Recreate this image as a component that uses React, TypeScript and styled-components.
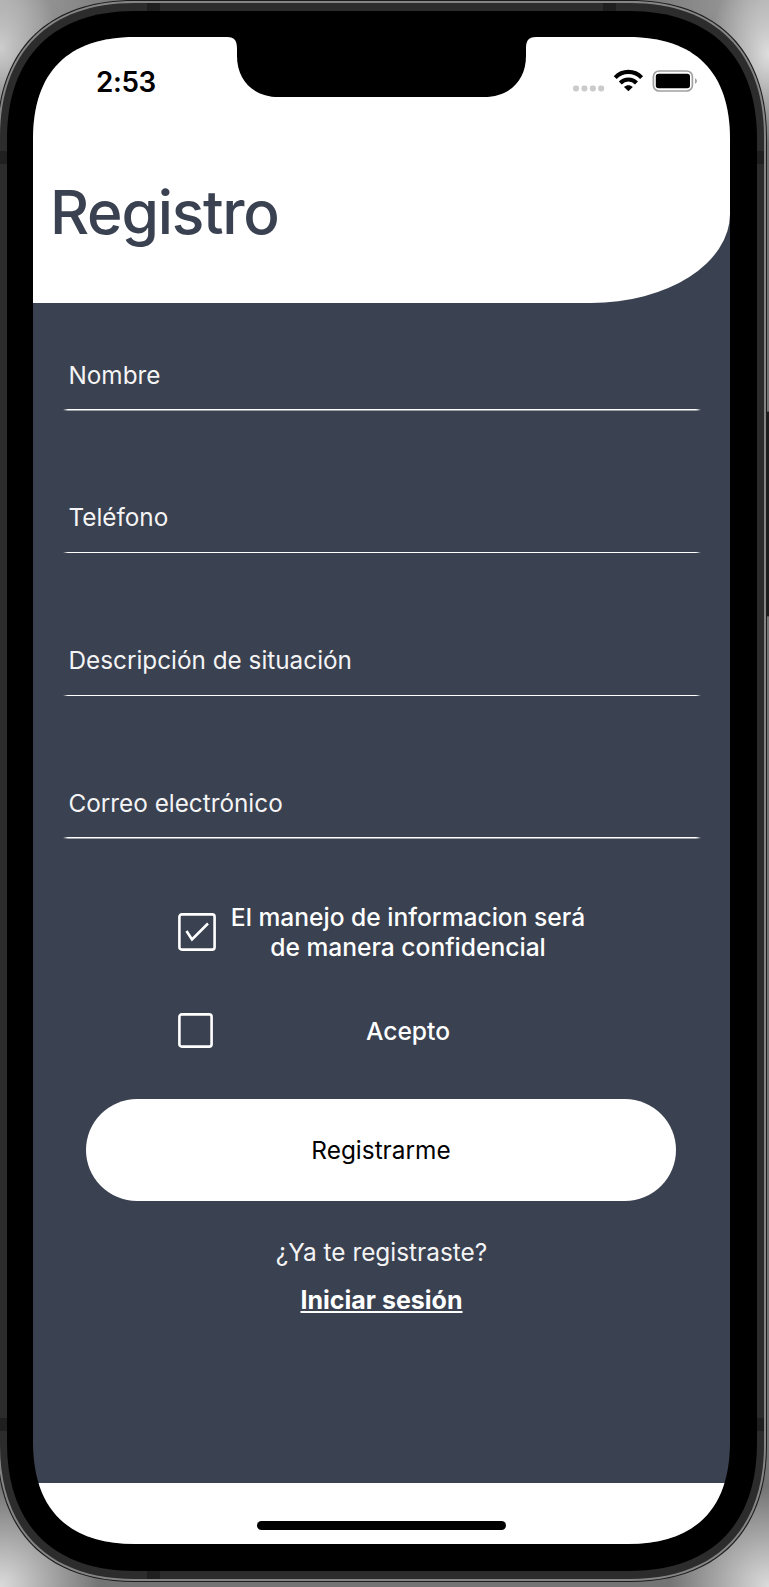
import React, { useState } from "react";
import styled, { createGlobalStyle } from "styled-components";

const INK = "#3a4150";

const Global = createGlobalStyle`
  * { box-sizing: border-box; }
  body {
    margin: 0;
    overflow: hidden;
    font-family: Inter, "Liberation Sans", sans-serif;
    -webkit-font-smoothing: antialiased;
  }
`;

/* Rounded rectangle with continuous corners: each starts l px from the corner, with control points c px from it. */
const squircle = (w: number, h: number, l: number, c: number) =>
  `path("M0 ${l}C0 ${c} ${c} 0 ${l} 0H${w - l}C${w - c} 0 ${w} ${c} ${w} ${l}V${h - l}C${w} ${h - c} ${w - c} ${h} ${w - l} ${h}H${l}C${c} ${h} 0 ${h - c} 0 ${h - l}Z")`;

const Backdrop = styled.main`
  position: relative;
  width: 769px;
  height: 1587px;
  overflow: hidden;
  background:
    radial-gradient(60px 80px at 0 48px, #cdcdcd 0, rgba(150, 150, 150, 0) 100%),
    radial-gradient(60px 90px at 769px 54px, #dedede 0, rgba(150, 150, 150, 0) 100%),
    radial-gradient(100px 100px at 0 1587px, #dcdcdc 0, rgba(130, 130, 130, 0) 100%),
    radial-gradient(100px 100px at 769px 1587px, #dcdcdc 0, rgba(130, 130, 130, 0) 100%),
    radial-gradient(140px 90px at 0 0, #a2a2a2 0, rgba(130, 130, 130, 0) 100%),
    radial-gradient(140px 90px at 769px 0, #a2a2a2 0, rgba(130, 130, 130, 0) 100%),
    #747474;
`;

const Layer = styled.div<{ $w: number; $h: number; $l: number; $c: number; $inset?: string; $fill: string }>`
  width: ${(p) => p.$w}px;
  height: ${(p) => p.$h}px;
  padding: ${(p) => p.$inset ?? 0};
  background: ${(p) => p.$fill};
  clip-path: ${(p) => squircle(p.$w, p.$h, p.$l, p.$c)};
`;

const Device = styled(Layer)`
  margin-left: -3px;
`;

const Frame = styled(Layer)`
  position: relative;
`;

const Bezel = styled(Layer)`
  position: relative;
`;

const Band = styled.i<{ $x: number; $y: number; $side?: boolean }>`
  position: absolute;
  left: ${(p) => p.$x}px;
  top: ${(p) => p.$y}px;
  width: ${(p) => (p.$side ? 8 : 13)}px;
  height: ${(p) => (p.$side ? 13 : 8)}px;
  background: #1f1f1f;
`;

const SideButton = styled.i`
  position: absolute;
  left: 766px;
  top: 411px;
  width: 3px;
  height: 206px;
  background: #1c1c1c;
  border: 1px solid #555;
  border-right: 0;
`;

const Screen = styled(Layer)`
  position: relative;
  display: flex;
  flex-direction: column;
`;

const Notch = styled.svg`
  position: absolute;
  left: 194px;
  top: 0;
`;

const Header = styled.header`
  height: 266px;
  background: #fff;
  border-bottom-right-radius: 139px 89px;
`;

const StatusBar = styled.div`
  display: flex;
  justify-content: space-between;
  height: 88px;
  padding: 31px 32px 0 63px;
`;

const Clock = styled.time`
  color: #000;
  font-size: 27.8px;
  font-weight: 600;
  line-height: 28px;
  letter-spacing: -0.4px;
`;

const Title = styled.h1`
  margin: 51px 0 0 17px;
  color: ${INK};
  font-size: 60.5px;
  font-weight: 500;
  line-height: 72px;
  letter-spacing: -1.25px;
`;

const Form = styled.form`
  display: flex;
  flex-direction: column;
  align-items: center;
  height: 1180px;
  padding-top: 37.5px;
  color: #fff;
`;

const Fields = styled.div`
  display: flex;
  flex-direction: column;
  gap: 72.8px;
  margin-bottom: 62.9px;
`;

const Field = styled.input`
  width: 638px;
  height: 70px;
  margin: 0;
  padding: 0 6px 2px;
  color: #fff;
  font: 400 24.3px/30px Inter, "Liberation Sans", sans-serif;
  background: linear-gradient(90deg, transparent, #fff 5px, #fff 633px, transparent) bottom / 100% 1.5px no-repeat;
  border: 0;
  outline: 0;
  &::placeholder { color: #f4f4f5; opacity: 1; }
`;

const Option = styled.label`
  display: flex;
  align-items: center;
  width: 410px;
  margin: 0 0 51.3px 3px;
`;

const NativeBox = styled.input`
  position: absolute;
  opacity: 0;
`;

const BoxSlot = styled.span`
  display: flex;
  width: 50px;
`;

const OptionText = styled.span`
  flex: 1;
  font-size: 24.6px;
  font-weight: 500;
  line-height: 30px;
  text-align: center;
  white-space: pre-line;
`;

const Submit = styled.button`
  width: 590px;
  height: 102px;
  margin: 0 1px 36px 0;
  color: #000;
  font: 400 24.4px/30px Inter, "Liberation Sans", sans-serif;
  background: #fff;
  border: 0;
  border-radius: 51px;
`;

const Question = styled.p`
  margin: 0 0 18px;
  color: #f4f4f5;
  font-size: 24.4px;
  line-height: 30px;
`;

const SignIn = styled.a`
  color: #fff;
  font-size: 25px;
  font-weight: 700;
  line-height: 30px;
  text-decoration: underline;
  text-underline-offset: 2px;
  text-decoration-thickness: 2px;
  text-decoration-skip-ink: none;
`;

const Footer = styled.footer`
  display: flex;
  flex: 1;
  justify-content: center;
  padding-top: 38px;
  background: #fff;
`;

const HomeBar = styled.div`
  width: 249px;
  height: 9px;
  background: #000;
  border-radius: 5px;
`;

const StatusIcons = () => (
  <svg width="125" height="25" viewBox="0 0 125 25">
    <g fill="#cbcbcb">
      {[0, 8.4, 16.8, 25.1].map((x) => (
        <rect key={x} x={x} y="17.5" width="6.1" height="6" rx="2.4" />
      ))}
    </g>
    <g fill="none" stroke="#000" strokeWidth="4.1">
      <path d="M42.2 9.6C49.6 2 61.2 2 68.6 9.6" />
      <path d="M47.3 15C51.9 10.3 58.9 10.3 63.5 15" />
    </g>
    <path d="M51 18.9C53.6 16.6 57.2 16.6 59.8 18.9L55.4 23.3Z" />
    <rect x="80.4" y="3" width="39" height="20" rx="5.8" fill="none" stroke="#a0a0a0" strokeWidth="1.7" />
    <rect x="82.8" y="5.7" width="34.2" height="14.6" rx="2.8" />
    <path d="M122 10.3C124.6 11.3 124.6 14.7 122 15.7Z" fill="#a0a0a0" />
  </svg>
);

const CheckIcon = ({ checked }: { checked: boolean }) => {
  const size = checked ? 38 : 35;
  return (
    <svg width={size} height={size} fill="none" stroke="#fff" strokeWidth="2.6">
      <rect x="1.4" y="1.4" width={size - 2.8} height={size - 2.8} rx="2.4" />
      {checked && <path d="M8.5 18L14 26.5L30 10.5" />}
    </svg>
  );
};

const fields = ["Nombre", "Teléfono", "Descripción de situación", "Correo electrónico"];

export default function App() {
  const [confidential, setConfidential] = useState(true);
  const [accepted, setAccepted] = useState(false);

  return (
    <Backdrop>
      <Global />
      <SideButton />
      <Device $w={770} $h={1582} $l={137} $c={50} $inset="1px" $fill="#1d1d1d">
        <Layer $w={768} $h={1580} $l={136} $c={50} $inset="2px" $fill="#858585">
          <Frame $w={764} $h={1576} $l={134} $c={49} $inset="8px 7px" $fill="#2c2c2c">
            <Band $x={147} $y={0} />
            <Band $x={603} $y={0} />
            <Band $x={147} $y={1568} />
            <Band $x={0} $y={148} $side />
            <Band $x={756} $y={148} $side />
            <Band $x={0} $y={1415} $side />
            <Band $x={756} $y={1415} $side />
            <Bezel $w={750} $h={1560} $l={128} $c={46} $inset="26px" $fill="#000">
              <Screen $w={697} $h={1507} $l={102} $c={35} $fill={INK}>
                <Header>
                  <StatusBar>
                    <Clock>2:53</Clock>
                    <StatusIcons />
                  </StatusBar>
                  <Title>Registro</Title>
                </Header>
                <Notch width="310" height="61" viewBox="0 0 310 61">
                  <path d="M0 0C8 0 10 4 10 12V19C10 43 26 60 52 60H257C283 60 299 43 299 19V12C299 4 301 0 309 0Z" />
                </Notch>
                <Form onSubmit={(e) => e.preventDefault()}>
                  <Fields>
                    {fields.map((name) => (
                      <Field key={name} placeholder={name} aria-label={name} />
                    ))}
                  </Fields>
                  <Option>
                    <NativeBox type="checkbox" checked={confidential} onChange={(e) => setConfidential(e.target.checked)} />
                    <BoxSlot>
                      <CheckIcon checked={confidential} />
                    </BoxSlot>
                    <OptionText>{"El manejo de informacion será\nde manera confidencial"}</OptionText>
                  </Option>
                  <Option>
                    <NativeBox type="checkbox" checked={accepted} onChange={(e) => setAccepted(e.target.checked)} />
                    <BoxSlot>
                      <CheckIcon checked={accepted} />
                    </BoxSlot>
                    <OptionText>Acepto</OptionText>
                  </Option>
                  <Submit>Registrarme</Submit>
                  <Question>¿Ya te registraste?</Question>
                  <SignIn href="#">Iniciar sesión</SignIn>
                </Form>
                <Footer>
                  <HomeBar />
                </Footer>
              </Screen>
            </Bezel>
          </Frame>
        </Layer>
      </Device>
    </Backdrop>
  );
}
